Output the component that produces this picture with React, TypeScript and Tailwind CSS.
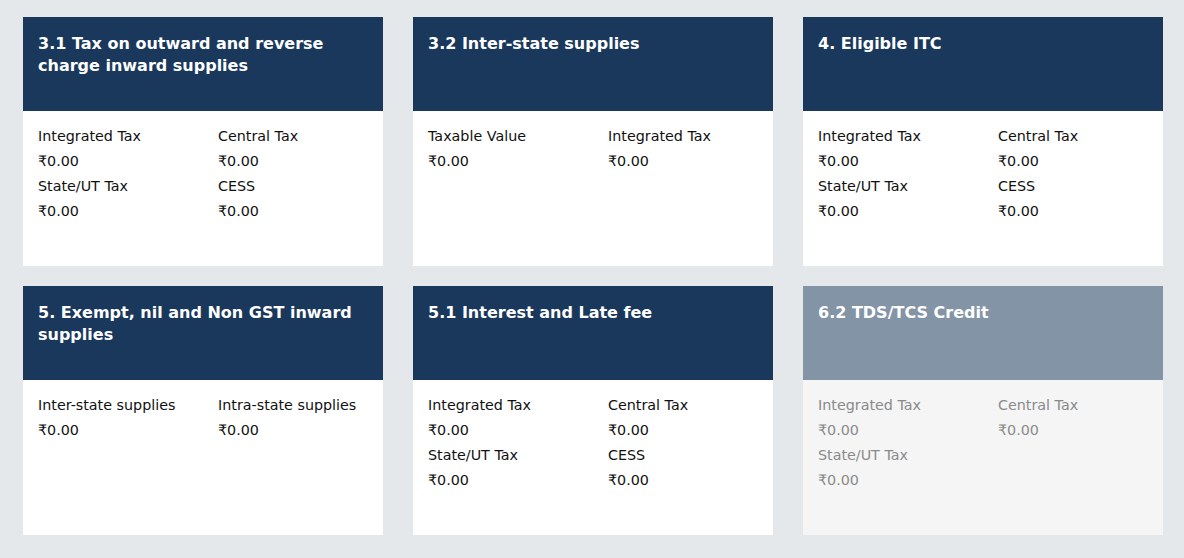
type Field = { label: string; value: string }

type Tile = {
  title: string
  fields: Field[]
  disabled?: boolean
}

const zero = '₹0.00'

const fourTax: Field[] = [
  { label: 'Integrated Tax', value: zero },
  { label: 'Central Tax', value: zero },
  { label: 'State/UT Tax', value: zero },
  { label: 'CESS', value: zero },
]

const tiles: Tile[] = [
  { title: '3.1 Tax on outward and reverse charge inward supplies', fields: fourTax },
  {
    title: '3.2 Inter-state supplies',
    fields: [
      { label: 'Taxable Value', value: zero },
      { label: 'Integrated Tax', value: zero },
    ],
  },
  { title: '4. Eligible ITC', fields: fourTax },
  {
    title: '5. Exempt, nil and Non GST inward supplies',
    fields: [
      { label: 'Inter-state supplies', value: zero },
      { label: 'Intra-state supplies', value: zero },
    ],
  },
  { title: '5.1 Interest and Late fee', fields: fourTax },
  {
    title: '6.2 TDS/TCS Credit',
    disabled: true,
    fields: [
      { label: 'Integrated Tax', value: zero },
      { label: 'Central Tax', value: zero },
      { label: 'State/UT Tax', value: zero },
    ],
  },
]

function SummaryTile({ tile }: { tile: Tile }) {
  const off = tile.disabled
  return (
    <div className={off ? 'flex h-[249px] flex-col bg-[#f5f5f5]' : 'flex h-[249px] flex-col bg-white'}>
      <div className={off ? 'h-[94px] shrink-0 bg-[#8494a7] px-[15px] pt-[16px]' : 'h-[94px] shrink-0 bg-[#1a385c] px-[15px] pt-[16px]'}>
        <h3 className="pr-4 text-[16px] font-bold leading-[22px] text-white">{tile.title}</h3>
      </div>
      <div className="grid grid-cols-[180px_1fr] px-[15px] pt-[13px]">
        {chunk(tile.fields).map((pair, r) =>
          pair.map((f) => (
            <div key={`${r}-${f.label}`} className={off ? 'text-[#8a8a8a]' : 'text-[#111]'}>
              <div className="text-[14.3px] leading-[25px]">{f.label}</div>
              <div className="text-[14.3px] leading-[25px]">{f.value}</div>
            </div>
          )),
        )}
      </div>
    </div>
  )
}

function chunk(fields: Field[]): Field[][] {
  const rows: Field[][] = []
  for (let i = 0; i < fields.length; i += 2) rows.push(fields.slice(i, i + 2))
  return rows
}

export default function App() {
  return (
    <div
      className="min-h-[558px] bg-[#e4e8eb] pb-[23px] pl-[23px] pr-[21px] pt-[17px]"
      style={{ fontFamily: '"DejaVu Sans", Verdana, sans-serif' }}
    >
      <div className="grid grid-cols-[360px_360px_360px] gap-x-[30px] gap-y-[20px]">
        {tiles.map((t) => (
          <SummaryTile key={t.title} tile={t} />
        ))}
      </div>
    </div>
  )
}
